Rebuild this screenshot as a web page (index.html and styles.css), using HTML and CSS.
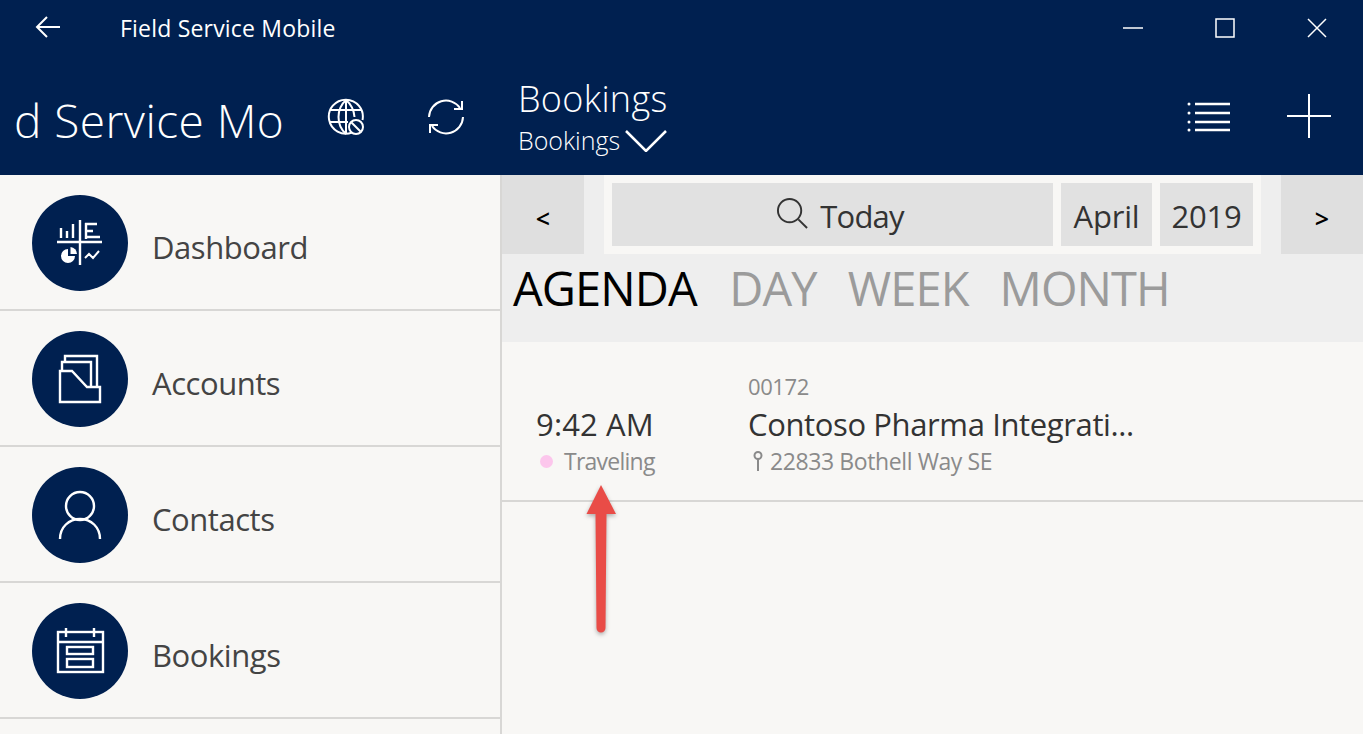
FILE: index.html
```html
<!DOCTYPE html>
<html lang="en">
<head>
    <meta charset="UTF-8">
    <meta name="viewport" content="width=device-width, initial-scale=1.0">
    <title>Field Service Mobile</title>
    <link rel="stylesheet" href="styles.css">
</head>
<body>
    <header class="topbar">
        <div class="titlebar">
            <svg class="back-icon" width="26" height="22" viewBox="0 0 26 22"><path d="M25 11H2M12 1 2 11l10 10"/></svg>
            <span class="app-title">Field Service Mobile</span>
            <div class="window-controls">
                <svg width="20" height="20" viewBox="0 0 20 20"><path d="M0 10h20"/></svg>
                <svg width="20" height="20" viewBox="0 0 20 20"><rect x="1" y="1" width="18" height="18"/></svg>
                <svg width="20" height="20" viewBox="0 0 20 20"><path d="M1 1l18 18M19 1 1 19"/></svg>
            </div>
        </div>
        <div class="commandbar">
            <div class="app-name">d Service Mo</div>
            <svg class="cmd-icon globe" width="38" height="38" viewBox="0 0 38 38">
                <path d="M25 34.500A17 17 0 1 1 35.500 22"/>
                <path d="M19 2c-10 9-10 25 0 34M19 2c6 5 8 11 8.500 17"/>
                <path d="M19 2v34M3 12h31M2 24h19"/>
                <circle cx="29" cy="29" r="7"/>
                <path d="M24.500 24.500l9 9"/>
            </svg>
            <svg class="cmd-icon sync" width="38" height="38" viewBox="0 0 38 38">
                <path d="M2 19A17 17 0 0 1 33 10M36 19A17 17 0 0 1 5 28"/>
                <path d="M35 3v8h-8M3 35v-8h8"/>
            </svg>
            <div class="view-picker">
                <div class="view-title">Bookings</div>
                <div class="view-sub">Bookings
                    <svg width="42" height="22" viewBox="0 0 42 22"><path d="M1 1l20 20L41 1"/></svg>
                </div>
            </div>
            <svg class="cmd-icon list" width="44" height="30" viewBox="0 0 44 30">
                <path d="M8 2h35M8 11h35M8 20h35M8 28h35"/>
                <circle class="dot" cx="2" cy="2" r="1.500"/>
                <circle class="dot" cx="2" cy="11" r="1.500"/>
                <circle class="dot" cx="2" cy="20" r="1.500"/>
                <circle class="dot" cx="2" cy="28" r="1.500"/>
            </svg>
            <svg class="cmd-icon plus" width="44" height="44" viewBox="0 0 44 44"><path d="M22 0v44M0 22h44"/></svg>
        </div>
    </header>

    <div class="main">
        <nav class="sidebar">
            <a class="nav-item">
                <span class="nav-circle">
                    <svg class="heavy" width="96" height="96" viewBox="0 0 96 96">
                        <path d="M48 25v45M25 47h45"/>
                        <path d="M29 33v10M35 36v7M41 29v14M54 28v16M53 29h12M53 36h8M53 42h15"/>
                        <path class="fill" d="M36 54a7 7 0 1 0 7 7h-7z"/>
                        <path class="fill" d="M38.500 52a7 7 0 0 1 6.500 7h-6.500z"/>
                        <path class="line" d="M53 63l4-4 4 4 6-7"/>
                    </svg>
                </span>
                <span class="nav-label">Dashboard</span>
            </a>
            <a class="nav-item">
                <span class="nav-circle">
                    <svg class="medium" width="96" height="96" viewBox="0 0 96 96">
                        <path d="M33 31v-6h32v31"/>
                        <path d="M30 40v-9h29v25"/>
                        <path d="M28 40h12l15 16h13v15H28z"/>
                    </svg>
                </span>
                <span class="nav-label">Accounts</span>
            </a>
            <a class="nav-item">
                <span class="nav-circle">
                    <svg class="medium" width="96" height="96" viewBox="0 0 96 96">
                        <circle cx="48" cy="39" r="14"/>
                        <path d="M28 72c0-12 9-20 20-20s20 8 20 20"/>
                    </svg>
                </span>
                <span class="nav-label">Contacts</span>
            </a>
            <a class="nav-item">
                <span class="nav-circle">
                    <svg class="medium" width="96" height="96" viewBox="0 0 96 96">
                        <rect x="26" y="29" width="45" height="40"/>
                        <path d="M26 39h45M34 25v9M62 25v9"/>
                        <rect x="35" y="44" width="26" height="7"/>
                        <rect x="35" y="56" width="26" height="8"/>
                    </svg>
                </span>
                <span class="nav-label">Bookings</span>
            </a>
        </nav>

        <section class="content">
            <div class="calendar-bar">
                <button class="page-btn">&lt;</button>
                <div class="date-panel">
                    <div class="date-btn today">
                        <svg width="33" height="33" viewBox="0 0 34 34"><circle cx="14" cy="14" r="12"/><path d="M23 23l9 9"/></svg>
                        Today
                    </div>
                    <div class="date-btn month">April</div>
                    <div class="date-btn year">2019</div>
                </div>
                <button class="page-btn">&gt;</button>
            </div>
            <div class="tabs">
                <span class="tab active">AGENDA</span>
                <span class="tab">DAY</span>
                <span class="tab">WEEK</span>
                <span class="tab">MONTH</span>
            </div>
            <div class="booking">
                <div class="booking-time">
                    <div class="time">9:42 AM</div>
                    <div class="status"><span class="status-dot"></span>Traveling</div>
                </div>
                <div class="booking-info">
                    <div class="booking-num">00172</div>
                    <div class="booking-name">Contoso Pharma Integrati...</div>
                    <div class="booking-addr">
                        <svg width="10" height="20" viewBox="0 0 10 20"><circle cx="5" cy="4.500" r="3.500"/><path d="M5 8v12"/></svg>
                        22833 Bothell Way SE
                    </div>
                </div>
            </div>
        </section>
    </div>

    <!-- annotation arrow over the screenshot -->
    <svg class="callout" width="50" height="170" viewBox="0 0 50 170">
        <path d="M25 5 40 34H30.500L29.500 148a4.500 4.500 0 0 1-9 0L19.500 34H10.500z"/>
    </svg>
</body>
</html>
```

FILE: styles.css
```css
:root {
    --navy: #002050;
    --panel: #f8f7f5;
    --grey-bar: #eeeeee;
    --grey-btn: #e1e1e1;
    --line: #d8d7d5;
    --text: #333;
    --muted: #8a8a8a;
    --font-family: 'Open Sans', 'Noto Sans', sans-serif;
}

html, body {
    height: 100%;
}

body {
    margin: 0;
    font-family: var(--font-family);
    background: var(--panel);
    color: var(--text);
    overflow: hidden;
    position: relative;
}

svg {
    display: block;
    flex: none;
    fill: none;
    stroke: currentColor;
    stroke-width: 2;
}

/* top bar */
.topbar {
    background: var(--navy);
    color: #fff;
    height: 175px;
}

.titlebar {
    display: flex;
    align-items: center;
    height: 58px;
    padding-left: 35px;
}

.back-icon {
    margin-top: -4px;
}

.app-title {
    margin-left: 59px;
    margin-top: -2px;
    font-size: 23px;
    letter-spacing: 0.2px;
}

.window-controls {
    display: flex;
    gap: 72px;
    margin-left: auto;
    margin-right: 36px;
    margin-top: -3px;
}

.window-controls svg {
    stroke-width: 1.5;
}

.commandbar {
    display: flex;
    align-items: center;
    height: 117px;
}

.app-name {
    width: 309px;
    padding-left: 14px;
    box-sizing: border-box;
    margin-top: 6px;
    font-size: 46px;
    font-weight: 300;
    letter-spacing: 0.45px;
    white-space: nowrap;
}

.cmd-icon.globe {
    margin-left: 18px;
}

.cmd-icon.sync {
    margin-left: 62px;
}

.view-picker {
    margin-left: 53px;
    margin-top: 2px;
    width: 669px;
}

.view-title {
    font-size: 36px;
    font-weight: 300;
    line-height: 44px;
    letter-spacing: 0.3px;
}

.view-sub {
    display: flex;
    align-items: center;
    gap: 5px;
    font-size: 25px;
    line-height: 38px;
    font-weight: 300;
    letter-spacing: 0;
}

.view-sub svg {
    margin-top: 2px;
    stroke-width: 2.5;
}

.cmd-icon.list {
    stroke-width: 2.5;
}

.cmd-icon.list .dot {
    fill: #fff;
    stroke: none;
}

.cmd-icon.plus {
    margin-left: 56px;
    margin-top: -2px;
}

/* body */
.main {
    display: flex;
    height: 559px;
}

.sidebar {
    width: 500px;
    border-right: 2px solid var(--line);
    flex: none;
}

.nav-item {
    display: flex;
    align-items: center;
    gap: 24px;
    height: 134px;
    padding-left: 32px;
    border-bottom: 2px solid var(--line);
}

.nav-circle {
    width: 96px;
    height: 96px;
    margin-top: 2px;
    border-radius: 50%;
    background: var(--navy);
    color: #fff;
    flex: none;
}

.nav-circle .heavy {
    stroke-width: 2.4;
}

.nav-circle .medium {
    stroke-width: 2.4;
}

.nav-circle .fill {
    fill: #fff;
    stroke: none;
}

.nav-circle .line {
    stroke-width: 2;
}

.nav-label {
    margin-top: 9px;
    font-size: 31px;
    letter-spacing: -0.45px;
    color: #444;
}

.content {
    flex: 1;
    min-width: 0;
}

.calendar-bar {
    display: flex;
    justify-content: space-between;
    height: 79px;
    background: var(--grey-bar);
}

.page-btn {
    width: 82px;
    border: none;
    background: #dfdfdf;
    color: #000;
    font-family: var(--font-family);
    font-size: 25px;
    font-weight: 600;
    padding: 0;
    padding-top: 6px;
}

.date-panel {
    display: flex;
    gap: 8px;
    width: 641px;
    padding: 8px;
    background: var(--panel);
}

.date-btn {
    display: flex;
    align-items: center;
    justify-content: center;
    padding-top: 2px;
    background: var(--grey-btn);
    font-size: 31px;
    letter-spacing: -0.2px;
}

.date-btn.today {
    flex: 1;
    gap: 11px;
    padding-left: 13px;
    letter-spacing: -0.8px;
}

.date-btn.today svg {
    margin-top: -4px;
    margin-left: 2px;
}

.date-btn.month {
    width: 91px;
}

.date-btn.year {
    width: 93px;
}

.tabs {
    display: flex;
    gap: 31px;
    height: 88px;
    padding-left: 11px;
    background: var(--grey-bar);
    font-size: 47px;
    letter-spacing: -0.9px;
    line-height: 68px;
    color: #9b9b9b;
}

.tab.active {
    margin-right: 1.5px;
    color: #000;
}

.booking {
    display: flex;
    height: 158px;
    border-bottom: 2px solid var(--line);
}

.booking-time {
    width: 212px;
    padding-left: 34px;
    padding-top: 62px;
}

.time {
    font-size: 31px;
    line-height: 40px;
    letter-spacing: 0.15px;
}

.status {
    display: flex;
    align-items: center;
    gap: 11px;
    padding-left: 4px;
    font-size: 23px;
    line-height: 34px;
    letter-spacing: -0.75px;
    color: var(--muted);
}

.status-dot {
    width: 13px;
    height: 13px;
    border-radius: 50%;
    background: #fcc6ec;
}

.booking-info {
    padding-top: 29px;
}

.booking-num {
    font-size: 22px;
    line-height: 30px;
    letter-spacing: -0.4px;
    color: var(--muted);
}

.booking-name {
    font-size: 31px;
    line-height: 46px;
    letter-spacing: -0.38px;
}

.booking-addr {
    display: flex;
    align-items: center;
    gap: 7px;
    padding-left: 5px;
    font-size: 23px;
    line-height: 28px;
    letter-spacing: -0.4px;
    color: var(--muted);
}

.callout {
    position: absolute;
    left: 576px;
    top: 480px;
    fill: #e94c47;
    stroke: none;
    filter: drop-shadow(0 2px 2px rgba(0, 0, 0, 0.3));
}
```
